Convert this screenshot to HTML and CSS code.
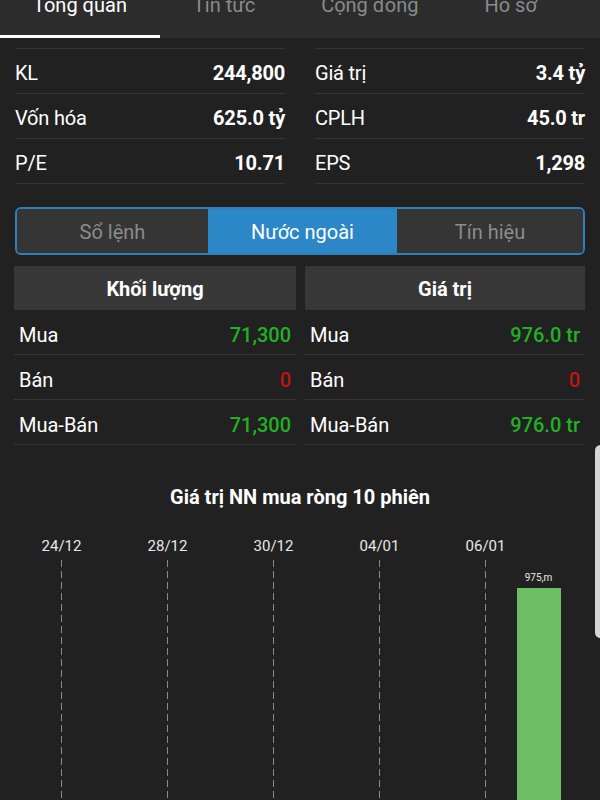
FILE: index.html
```html
<!DOCTYPE html>
<html lang="vi">
<head>
  <meta charset="UTF-8">
  <meta name="viewport" content="width=device-width, initial-scale=1.0">
  <title>Nước ngoài</title>
  <link rel="stylesheet" href="styles.css">
</head>
<body>
  <nav class="tabs">
    <a class="tab active">Tổng quan</a>
    <a class="tab">Tin tức</a>
    <a class="tab">Cộng đồng</a>
    <a class="tab">Hồ sơ</a>
  </nav>

  <section class="stats">
    <ul class="stat-list">
      <li class="stat"><span>KL</span><b>244,800</b></li>
      <li class="stat"><span>Vốn hóa</span><b>625.0 tỷ</b></li>
      <li class="stat"><span>P/E</span><b>10.71</b></li>
    </ul>
    <ul class="stat-list">
      <li class="stat"><span>Giá trị</span><b>3.4 tỷ</b></li>
      <li class="stat"><span>CPLH</span><b>45.0 tr</b></li>
      <li class="stat"><span>EPS</span><b>1,298</b></li>
    </ul>
  </section>

  <div class="segment">
    <button class="seg">Sổ lệnh</button>
    <button class="seg active">Nước ngoài</button>
    <button class="seg">Tín hiệu</button>
  </div>

  <section class="foreign">
    <ul class="foreign-list">
      <li class="head">Khối lượng</li>
      <li class="row"><span>Mua</span><span class="up">71,300</span></li>
      <li class="row"><span>Bán</span><span class="down">0</span></li>
      <li class="row"><span>Mua-Bán</span><span class="up">71,300</span></li>
    </ul>
    <ul class="foreign-list">
      <li class="head">Giá trị</li>
      <li class="row"><span>Mua</span><span class="up">976.0 tr</span></li>
      <li class="row"><span>Bán</span><span class="down">0</span></li>
      <li class="row"><span>Mua-Bán</span><span class="up">976.0 tr</span></li>
    </ul>
  </section>

  <section class="chart">
    <h2 class="chart-title">Giá trị NN mua ròng 10 phiên</h2>
    <div class="chart-labels">
      <span>24/12</span><span></span>
      <span>28/12</span><span></span>
      <span>30/12</span><span></span>
      <span>04/01</span><span></span>
      <span>06/01</span><span></span>
    </div>
    <div class="chart-plot">
      <div class="slot"><i class="grid-line"></i></div><div class="slot"></div>
      <div class="slot"><i class="grid-line"></i></div><div class="slot"></div>
      <div class="slot"><i class="grid-line"></i></div><div class="slot"></div>
      <div class="slot"><i class="grid-line"></i></div><div class="slot"></div>
      <div class="slot"><i class="grid-line"></i></div>
      <div class="slot bar-slot">
        <span class="bar-value">975,m</span>
        <div class="bar"></div>
      </div>
    </div>
  </section>

  <div class="scroll-thumb"></div>
</body>
</html>
```

FILE: styles.css
```css
*{
  padding: 0;
  margin: 0;
  box-sizing: border-box;
}
html, body{
  overflow: hidden;
}
body{
  background-color: #212121;
  color: #fff;
  font-family: Roboto, "Noto Sans", sans-serif;
  font-size: 20px;
}
ul{
  list-style: none;
}

/* top tabs */
.tabs{
  display: flex;
  height: 45px;
  margin-top: -7px;
  background-color: #2c2c2c;
}
.tab{
  padding: 0 33px;
  line-height: 24px;
  color: #8a8a8a;
  font-size: 20px;
}
.tab.active{
  color: #fff;
  border-bottom: 3px solid #fff;
}

/* stats */
.stats{
  display: grid;
  grid-template-columns: 1fr 1fr;
  gap: 30px;
  padding: 0 15px;
  margin-top: 10px;
}
.stat-list{
  border-top: 1px solid #363636;
}
.stat{
  display: flex;
  justify-content: space-between;
  align-items: center;
  height: 45px;
  padding-top: 3px;
  border-bottom: 1px solid #363636;
  letter-spacing: -0.2px;
}
.stat b{
  font-weight: 700;
}

/* segment control */
.segment{
  display: grid;
  grid-template-columns: 191px 189px 1fr;
  margin: 23px 15px 0;
  height: 48px;
  border: 2px solid #2f80b9;
  border-radius: 6px;
  overflow: hidden;
}
.seg{
  border: none;
  background-color: #363535;
  color: #8c8c8c;
  font-family: inherit;
  font-size: 20px;
  padding-top: 2px;
}
.seg.active{
  background-color: #2b87c6;
  color: #fff;
}

/* foreign trade */
.foreign{
  display: grid;
  grid-template-columns: 282px 1fr;
  gap: 9px;
  padding: 0 15px 0 14px;
  margin-top: 11px;
}
.head{
  height: 44px;
  line-height: 46px;
  text-align: center;
  background-color: #373737;
  font-weight: 700;
}
.row{
  display: flex;
  justify-content: space-between;
  align-items: center;
  height: 45px;
  padding: 5px 5px 0;
  border-bottom: 1px solid #363636;
}
.up, .down{
  font-weight: 500;
}
.up{
  color: #22b124;
}
.down{
  color: #c41111;
}

/* chart */
.chart{
  padding: 0 35px;
}
.chart-title{
  margin-top: 40px;
  text-align: center;
  font-size: 20px;
  line-height: 24px;
}
.chart-labels, .chart-plot{
  display: grid;
  grid-template-columns: repeat(10, 1fr);
}
.chart-labels{
  margin-top: 28px;
  font-size: 15px;
  line-height: 18px;
  text-align: center;
  color: #e8e8e8;
}
.chart-plot{
  margin-top: 5px;
  height: 240px;
}
.slot{
  display: flex;
  justify-content: center;
}
.grid-line{
  width: 1px;
  height: 100%;
  background: repeating-linear-gradient(to bottom, #8a8a8a 0 7px, transparent 7px 11px);
}
.bar-slot{
  flex-direction: column;
  align-items: center;
  padding-top: 12px;
}
.bar-value{
  font-size: 10px;
  line-height: 12px;
  color: #e8e8e8;
}
.bar{
  flex: 1;
  width: 44px;
  margin-top: 4px;
  background-color: #6dbd63;
}

.scroll-thumb{
  position: fixed;
  top: 445px;
  right: -6px;
  width: 11px;
  height: 193px;
  border-radius: 6px;
  background-color: #d6d6d6;
}
```
